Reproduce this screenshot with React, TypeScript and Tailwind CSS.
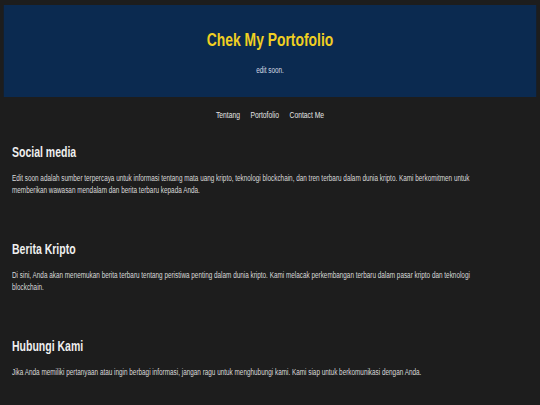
import React from 'react';

const sections = [
  {
    title: 'Social media',
    text: 'Edit soon adalah sumber terpercaya untuk informasi tentang mata uang kripto, teknologi blockchain, dan tren terbaru dalam dunia kripto. Kami berkomitmen untuk memberikan wawasan mendalam dan berita terbaru kepada Anda.',
  },
  {
    title: 'Berita Kripto',
    text: 'Di sini, Anda akan menemukan berita terbaru tentang peristiwa penting dalam dunia kripto. Kami melacak perkembangan terbaru dalam pasar kripto dan teknologi blockchain.',
  },
  {
    title: 'Hubungi Kami',
    text: 'Jika Anda memiliki pertanyaan atau ingin berbagi informasi, jangan ragu untuk menghubungi kami. Kami siap untuk berkomunikasi dengan Anda.',
  },
];

export default function App() {
  return (
    <div className="h-[405px] w-[540px] overflow-hidden bg-[#1d1d1d]">
      {/* page is drawn at 720px and squeezed horizontally, like the narrow type in the shot */}
      <div
        className="w-[720px] origin-top-left scale-x-75 pt-[5px] text-[#e2e2e2]"
        style={{ fontFamily: '"Liberation Sans", Arial, sans-serif' }}
      >
        {/* Header */}
        <header className="mx-[5px] flex h-[92px] flex-col items-center bg-[#0b2a50] pt-[24px]">
          <h1 className="text-[18.5px] leading-[22px] font-bold text-[#f0cf22]">Chek My Portofolio</h1>
          <p className="mt-[14px] text-[8.5px] leading-[10px] text-[#d6dbe3]">edit soon.</p>
        </header>

        {/* Nav */}
        <nav className="flex justify-center gap-[14px] pt-[12px] text-[9px] leading-[12px] text-[#e4e4e4]">
          <a href="#">Tentang</a>
          <a href="#">Portofolio</a>
          <a href="#">Contact Me</a>
        </nav>

        <main className="px-[16px] pt-[23px]">
          {sections.map((s) => (
            <section key={s.title} className="mb-[45px]">
              <h2 className="text-[14px] leading-[16px] font-bold text-[#efefef]">{s.title}</h2>
              <p className="mt-[12px] max-w-[650px] text-[8.5px] leading-[12px] text-[#dadada]">{s.text}</p>
            </section>
          ))}
        </main>
      </div>
    </div>
  );
}
